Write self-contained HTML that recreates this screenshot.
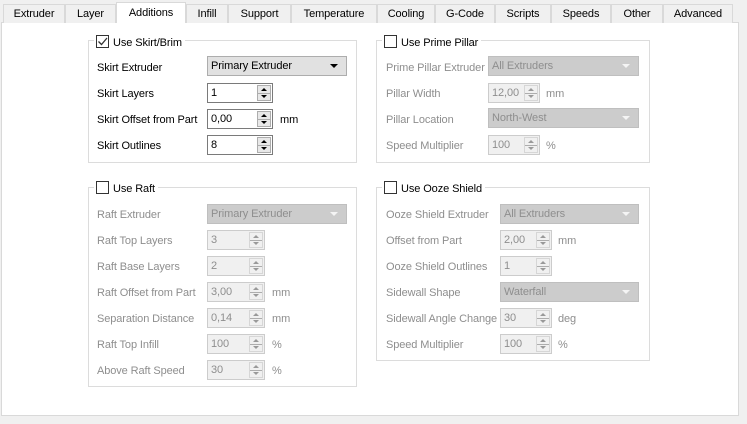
<!DOCTYPE html><html><head><meta charset="utf-8"><style>
*{box-sizing:border-box}
body{margin:0;width:747px;height:424px;background:#f0f0f0;font-family:"Liberation Sans",sans-serif;font-size:11px;letter-spacing:-0.1px;color:#000;position:relative;overflow:hidden}
.a{position:absolute;white-space:nowrap}
.tab{position:absolute;top:4px;height:19px;border:1px solid #d9d9d9;border-bottom:none;background:#f0f0f0;text-align:center;line-height:19px}
.tab.on{top:2px;height:21px;background:#fff;z-index:2;line-height:20px}
.panel{position:absolute;left:1px;top:22px;width:738px;height:394px;background:#fff;border:1px solid #d9d9d9}
.grp{position:absolute;border:1px solid #dcdcdc}
.ttl{position:absolute;background:#fff;padding:0 3px 0 2px;line-height:14px;height:14px}
.cb{display:inline-block;width:13px;height:13px;border:1px solid #333;vertical-align:-2px;margin-right:4px;background:#fff;position:relative}
.lab{position:absolute;line-height:14px;white-space:nowrap;margin-top:1px}
.dis{color:#8e8e8e}
.combo{position:absolute;height:20px;line-height:19px;padding-left:3px;border:1px solid #adadad;background:#e1e1e1}
.combo.d{background:#cccccc;border-color:#bfbfbf;color:#8e8e8e}
.combo:after{content:"";position:absolute;right:8px;top:7px;border-left:4px solid transparent;border-right:4px solid transparent;border-top:4px solid #000}
.combo.d:after{border-top-color:#f4f4f4}
.spin{position:absolute;height:20px;line-height:19px;padding-left:3px;border:1px solid #7a7a7a;background:#fff}
.spin.d{border-color:#cccccc;background:#f0f0f0;color:#8e8e8e}
.sb{position:absolute;right:1px;top:1px;width:14px;height:16px;border:1px solid #adadad;background:#e8e8e8}
.spin.d .sb{border-color:#d6d6d6;background:#f0f0f0}
.sb:before{content:"";position:absolute;left:3px;top:2px;border-left:3px solid transparent;border-right:3px solid transparent;border-bottom:3px solid #000}
.sb:after{content:"";position:absolute;left:3px;top:9px;border-left:3px solid transparent;border-right:3px solid transparent;border-top:3px solid #000}
.sb i{position:absolute;left:0;right:0;top:7px;border-top:1px solid #adadad}
.spin.d .sb:before{border-bottom-color:#999}.spin.d .sb:after{border-top-color:#999}
</style></head><body>
<div class="panel"></div>
<div class="tab" style="left:3px;width:62px">Extruder</div>
<div class="tab" style="left:65px;width:51px">Layer</div>
<div class="tab on" style="left:116px;width:70px">Additions</div>
<div class="tab" style="left:186px;width:42px">Infill</div>
<div class="tab" style="left:228px;width:63px">Support</div>
<div class="tab" style="left:291px;width:86px">Temperature</div>
<div class="tab" style="left:377px;width:58px">Cooling</div>
<div class="tab" style="left:435px;width:60px">G-Code</div>
<div class="tab" style="left:495px;width:56px">Scripts</div>
<div class="tab" style="left:551px;width:60px">Speeds</div>
<div class="tab" style="left:611px;width:52px">Other</div>
<div class="tab" style="left:663px;width:70px">Advanced</div>

<div class="grp" style="left:88px;top:40px;width:269px;height:123px"></div>
<div class="ttl a" style="left:94px;top:35px"><span class="cb"><svg width="11" height="11" style="position:absolute;left:0;top:0"><path d="M1.5 5.5 L4.5 8.5 L10 2" stroke="#333" stroke-width="1.3" fill="none"/></svg></span>Use Skirt/Brim</div>
<div class="lab" style="left:97px;top:60px">Skirt Extruder</div>
<div class="combo" style="left:207px;top:56px;width:140px">Primary Extruder</div>
<div class="lab" style="left:97px;top:86px">Skirt Layers</div>
<div class="spin" style="left:207px;top:83px;width:66px">1<div class="sb"><i></i></div></div>
<div class="lab" style="left:97px;top:112px">Skirt Offset from Part</div>
<div class="spin" style="left:207px;top:109px;width:66px">0,00<div class="sb"><i></i></div></div>
<div class="lab" style="left:280px;top:112px">mm</div>
<div class="lab" style="left:97px;top:138px">Skirt Outlines</div>
<div class="spin" style="left:207px;top:135px;width:66px">8<div class="sb"><i></i></div></div>

<div class="grp" style="left:376px;top:40px;width:274px;height:123px"></div>
<div class="ttl a" style="left:382px;top:35px"><span class="cb"></span>Use Prime Pillar</div>
<div class="lab dis" style="left:386px;top:60px">Prime Pillar Extruder</div>
<div class="combo d" style="left:488px;top:56px;width:151px">All Extruders</div>
<div class="lab dis" style="left:386px;top:86px">Pillar Width</div>
<div class="spin d" style="left:488px;top:83px;width:52px">12,00<div class="sb"><i></i></div></div>
<div class="lab dis" style="left:546px;top:86px">mm</div>
<div class="lab dis" style="left:386px;top:112px">Pillar Location</div>
<div class="combo d" style="left:488px;top:108px;width:151px">North-West</div>
<div class="lab dis" style="left:386px;top:138px">Speed Multiplier</div>
<div class="spin d" style="left:488px;top:135px;width:52px">100<div class="sb"><i></i></div></div>
<div class="lab dis" style="left:546px;top:138px">%</div>

<div class="grp" style="left:88px;top:187px;width:269px;height:200px"></div>
<div class="ttl a" style="left:94px;top:181px"><span class="cb"></span>Use Raft</div>
<div class="lab dis" style="left:97px;top:207px">Raft Extruder</div>
<div class="combo d" style="left:207px;top:204px;width:140px">Primary Extruder</div>
<div class="lab dis" style="left:97px;top:233px">Raft Top Layers</div>
<div class="spin d" style="left:207px;top:230px;width:58px">3<div class="sb"><i></i></div></div>
<div class="lab dis" style="left:97px;top:259px">Raft Base Layers</div>
<div class="spin d" style="left:207px;top:256px;width:58px">2<div class="sb"><i></i></div></div>
<div class="lab dis" style="left:97px;top:285px">Raft Offset from Part</div>
<div class="spin d" style="left:207px;top:282px;width:58px">3,00<div class="sb"><i></i></div></div>
<div class="lab dis" style="left:272px;top:285px">mm</div>
<div class="lab dis" style="left:97px;top:311px">Separation Distance</div>
<div class="spin d" style="left:207px;top:308px;width:58px">0,14<div class="sb"><i></i></div></div>
<div class="lab dis" style="left:272px;top:311px">mm</div>
<div class="lab dis" style="left:97px;top:337px">Raft Top Infill</div>
<div class="spin d" style="left:207px;top:334px;width:58px">100<div class="sb"><i></i></div></div>
<div class="lab dis" style="left:272px;top:337px">%</div>
<div class="lab dis" style="left:97px;top:363px">Above Raft Speed</div>
<div class="spin d" style="left:207px;top:360px;width:58px">30<div class="sb"><i></i></div></div>
<div class="lab dis" style="left:272px;top:363px">%</div>

<div class="grp" style="left:376px;top:187px;width:274px;height:174px"></div>
<div class="ttl a" style="left:382px;top:181px"><span class="cb"></span>Use Ooze Shield</div>
<div class="lab dis" style="left:386px;top:207px">Ooze Shield Extruder</div>
<div class="combo d" style="left:500px;top:204px;width:139px">All Extruders</div>
<div class="lab dis" style="left:386px;top:233px">Offset from Part</div>
<div class="spin d" style="left:500px;top:230px;width:52px">2,00<div class="sb"><i></i></div></div>
<div class="lab dis" style="left:558px;top:233px">mm</div>
<div class="lab dis" style="left:386px;top:259px">Ooze Shield Outlines</div>
<div class="spin d" style="left:500px;top:256px;width:52px">1<div class="sb"><i></i></div></div>
<div class="lab dis" style="left:386px;top:285px">Sidewall Shape</div>
<div class="combo d" style="left:500px;top:282px;width:139px">Waterfall</div>
<div class="lab dis" style="left:386px;top:311px">Sidewall Angle Change</div>
<div class="spin d" style="left:500px;top:308px;width:52px">30<div class="sb"><i></i></div></div>
<div class="lab dis" style="left:558px;top:311px">deg</div>
<div class="lab dis" style="left:386px;top:337px">Speed Multiplier</div>
<div class="spin d" style="left:500px;top:334px;width:52px">100<div class="sb"><i></i></div></div>
<div class="lab dis" style="left:558px;top:337px">%</div>
</body></html>
